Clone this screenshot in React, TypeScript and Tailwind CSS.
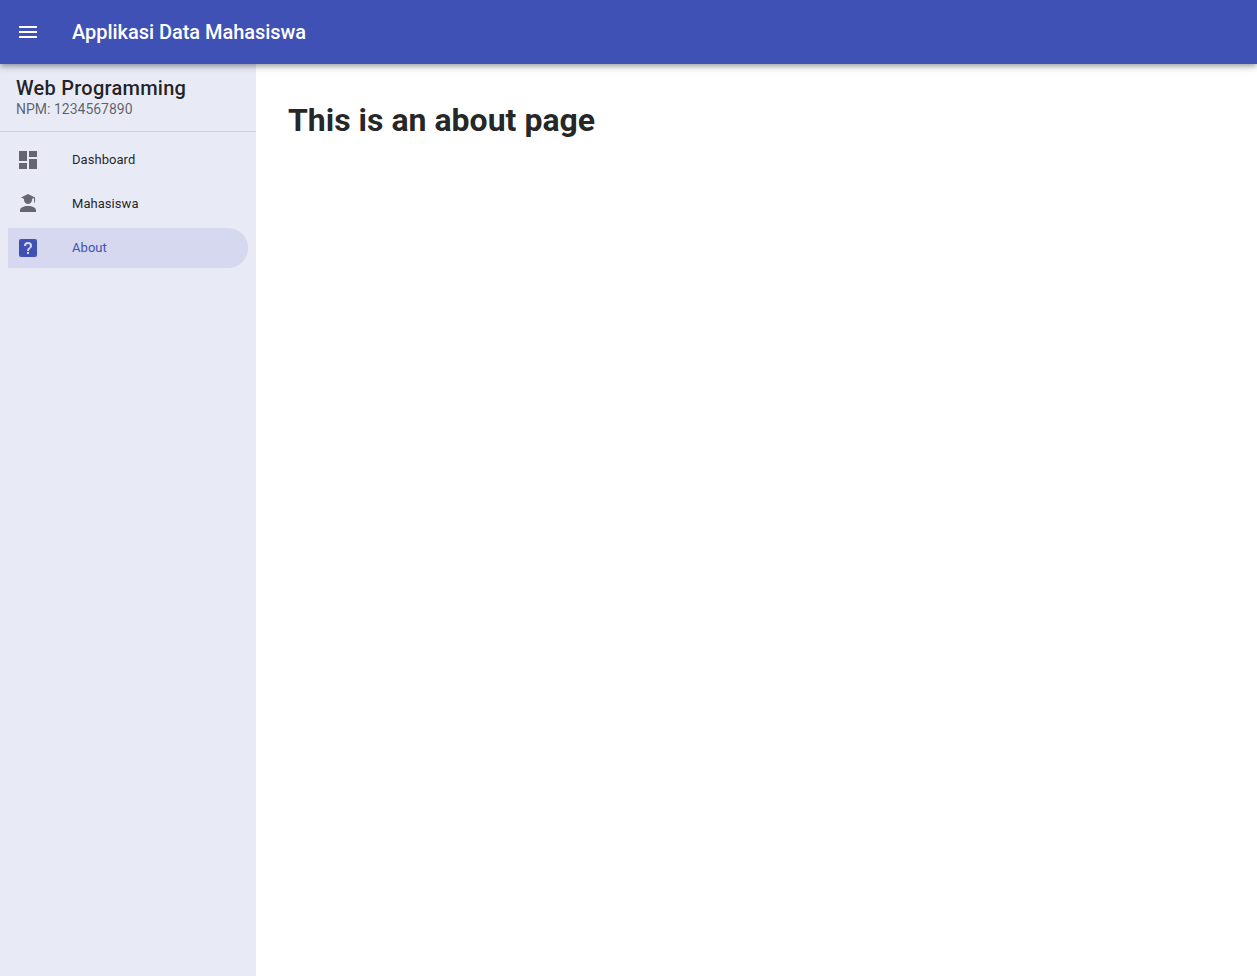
const navItems = [
  {
    label: "Dashboard",
    icon: "M13,3V9H21V3M13,21H21V11H13M3,21H11V15H3M3,13H11V3H3V13Z",
  },
  {
    label: "Mahasiswa",
    icon: "M16 8C16 10.21 14.21 12 12 12C9.79 12 8 10.21 8 8L8.11 6.91L5 5.5L12 2L19 5.5V10.5H18V6L15.89 6.91L16 8M12 14C16.42 14 20 15.79 20 18V20H4V18C4 15.79 7.58 14 12 14Z",
  },
  {
    label: "About",
    icon: "M11,18H13V16H11V18M12,6A4,4 0 0,0 8,10H10A2,2 0 0,1 12,8A2,2 0 0,1 14,10C14,12 11,11.75 11,15H13C13,12.75 16,12.5 16,10A4,4 0 0,0 12,6M5,3H19A2,2 0 0,1 21,5V19A2,2 0 0,1 19,21H5A2,2 0 0,1 3,19V5A2,2 0 0,1 5,3Z",
    active: true,
  },
];

function Icon({ d, className }: { d: string; className: string }) {
  return (
    <svg viewBox="0 0 24 24" className={className} fill="currentColor">
      <path d={d} fillRule="evenodd" />
    </svg>
  );
}

export default function App() {
  return (
    <div className="flex h-screen flex-col overflow-hidden bg-white font-['Roboto',sans-serif]">
      {/* app bar */}
      <header className="relative z-10 flex h-16 shrink-0 items-center bg-[#3f51b5] pl-4 text-white shadow-[0_2px_4px_-1px_rgba(0,0,0,0.2),0_4px_5px_0_rgba(0,0,0,0.14),0_1px_10px_0_rgba(0,0,0,0.12)]">
        <Icon d="M3,6H21V8H3V6M3,11H21V13H3V11M3,16H21V18H3V16Z" className="h-6 w-6" />
        <div className="ml-8 text-[20px] font-medium tracking-[-0.04px]">Applikasi Data Mahasiswa</div>
      </header>

      <div className="flex min-h-0 flex-1">
        {/* drawer */}
        <aside className="w-64 shrink-0 bg-[#e8eaf6]">
          <div className="h-[68px] border-b border-[#cdcfdb] px-4 pt-3">
            <div className="text-[20px] leading-[24px] font-medium tracking-[0.25px] text-black/87">Web Programming</div>
            <div className="text-[14px] leading-[18px] text-black/60">NPM: 1234567890</div>
          </div>
          <nav className="flex flex-col gap-1 px-2 pt-2">
            {navItems.map((item) => (
              <div
                key={item.label}
                className={`flex h-10 items-center rounded-r-[20px] px-2 ${item.active ? "bg-[#d5d8ee] text-[#3f51b5]" : "text-black/87"}`}
              >
                <Icon d={item.icon} className={`h-6 w-6 ${item.active ? "" : "text-[#666670]"}`} />
                <span className="ml-8 text-[13px] leading-4 font-normal tracking-[0.05px]">{item.label}</span>
              </div>
            ))}
          </nav>
        </aside>

        {/* main */}
        <main className="flex-1 px-8 pt-8">
          <h1 className="text-[32px] leading-[48px] font-bold text-black/87">This is an about page</h1>
        </main>
      </div>
    </div>
  );
}
